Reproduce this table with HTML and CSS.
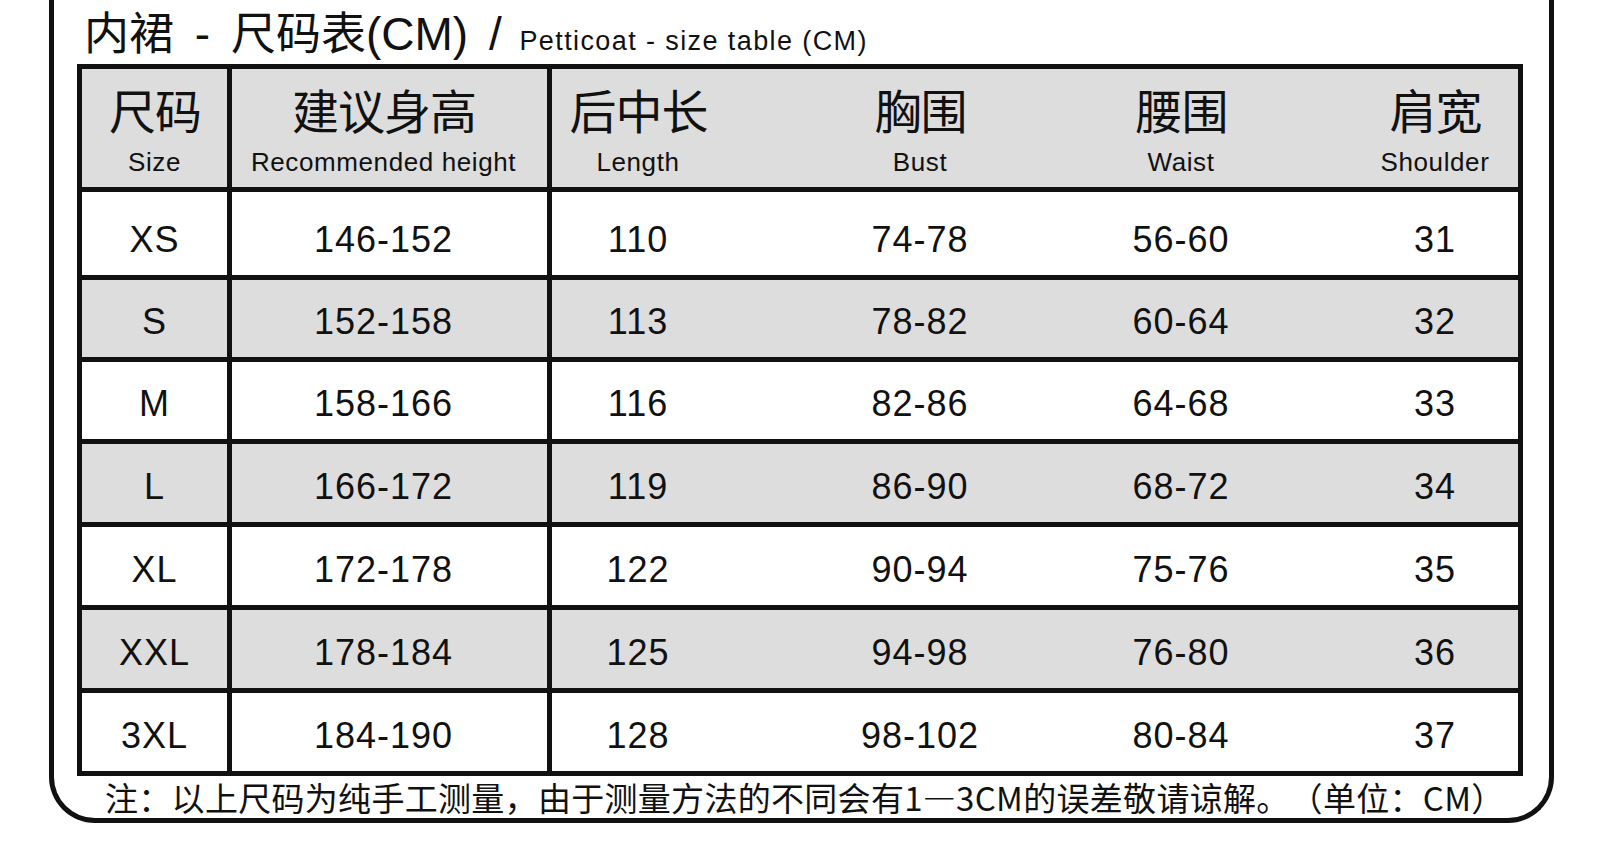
FILE: index.html
```html
<!DOCTYPE html>
<html lang="zh-CN">
<head>
<meta charset="utf-8">
<title>内裙 - 尺码表</title>
<link rel="stylesheet" href="styles.css">
</head>
<body>
<div class="frame">
  <h1 class="title"><span class="t-cjk">内裙</span> - <span class="t-cjk">尺码表</span>(CM) / <span class="t-en">Petticoat - size table (CM)</span></h1>

  <div class="size-table">
    <div class="cell c-size gray head">
      <div class="h-cn">尺码</div>
      <div class="h-en">Size</div>
    </div>
    <div class="cell c-height gray head">
      <div class="h-cn">建议身高</div>
      <div class="h-en">Recommended height</div>
    </div>
    <div class="cell c-rest gray head">
      <div class="sub s1"><div class="h-cn">后中长</div><div class="h-en">Length</div></div>
      <div class="sub s2"><div class="h-cn">胸围</div><div class="h-en">Bust</div></div>
      <div class="sub s3"><div class="h-cn">腰围</div><div class="h-en">Waist</div></div>
      <div class="sub s4"><div class="h-cn">肩宽</div><div class="h-en">Shoulder</div></div>
    </div>

    <div class="cell c-size data first">XS</div>
    <div class="cell c-height data first">146-152</div>
    <div class="cell c-rest data first">
      <div class="sub s1">110</div><div class="sub s2">74-78</div><div class="sub s3">56-60</div><div class="sub s4">31</div>
    </div>

    <div class="cell c-size data gray">S</div>
    <div class="cell c-height data gray">152-158</div>
    <div class="cell c-rest data gray">
      <div class="sub s1">113</div><div class="sub s2">78-82</div><div class="sub s3">60-64</div><div class="sub s4">32</div>
    </div>

    <div class="cell c-size data">M</div>
    <div class="cell c-height data">158-166</div>
    <div class="cell c-rest data">
      <div class="sub s1">116</div><div class="sub s2">82-86</div><div class="sub s3">64-68</div><div class="sub s4">33</div>
    </div>

    <div class="cell c-size data gray">L</div>
    <div class="cell c-height data gray">166-172</div>
    <div class="cell c-rest data gray">
      <div class="sub s1">119</div><div class="sub s2">86-90</div><div class="sub s3">68-72</div><div class="sub s4">34</div>
    </div>

    <div class="cell c-size data">XL</div>
    <div class="cell c-height data">172-178</div>
    <div class="cell c-rest data">
      <div class="sub s1">122</div><div class="sub s2">90-94</div><div class="sub s3">75-76</div><div class="sub s4">35</div>
    </div>

    <div class="cell c-size data gray">XXL</div>
    <div class="cell c-height data gray">178-184</div>
    <div class="cell c-rest data gray">
      <div class="sub s1">125</div><div class="sub s2">94-98</div><div class="sub s3">76-80</div><div class="sub s4">36</div>
    </div>

    <div class="cell c-size data">3XL</div>
    <div class="cell c-height data">184-190</div>
    <div class="cell c-rest data">
      <div class="sub s1">128</div><div class="sub s2">98-102</div><div class="sub s3">80-84</div><div class="sub s4">37</div>
    </div>
  </div>

  <p class="note">注：以上尺码为纯手工测量，由于测量方法的不同会有1—3CM的误差敬请谅解。（单位：CM）</p>
</div>
</body>
</html>
```

FILE: styles.css
```css
html, body {
  margin: 0;
  padding: 0;
  background: #ffffff;
}

body {
  color: #111111;
  font-family: "Liberation Sans", "Noto Sans CJK SC", sans-serif;
}

.frame {
  margin-left: 49px;
  width: 1495px;
  height: 818px;
  border: 5px solid #111111;
  border-top: 0;
  border-radius: 0 0 46px 46px;
  background: #ffffff;
}

/* ---------- title ---------- */
.title {
  margin: 0;
  box-sizing: border-box;
  height: 64px;
  padding: 5px 0 0 30px;
  font-family: "Liberation Sans", "Noto Sans CJK SC", sans-serif;
  font-weight: normal;
  font-size: 46px;
  line-height: 59px;
  letter-spacing: 0;
  word-spacing: 8px;
  white-space: nowrap;
  color: #111111;
}

.t-cjk {
  display: inline-block;
  font-family: "Noto Sans CJK SC", sans-serif;
  font-size: 45px;
  line-height: 50px;
  letter-spacing: 0;
  word-spacing: 0;
}

.t-en {
  display: inline-block;
  margin-left: -3px;
  font-family: "Liberation Sans", sans-serif;
  font-size: 27px;
  line-height: 30px;
  letter-spacing: 1.4px;
  word-spacing: 0;
}

/* ---------- table ---------- */
.size-table {
  margin-left: 23px;
  width: 1436px;
  display: grid;
  grid-template-columns: 145px 315px 966px;
  grid-template-rows: 118px 83px 77px 77px 78px 78px 78px 78px;
  gap: 5px;
  padding: 5px;
  background: #111111;
}

.cell {
  background: #ffffff;
  box-sizing: border-box;
}

.cell.gray {
  background: #dddddd;
}

.c-size,
.c-height {
  display: flex;
  flex-direction: column;
  align-items: center;
}

.c-height {
  padding-right: 12px;
}

.c-rest {
  display: grid;
  grid-template-columns: 21px 130px 152px 130px 131px 130px 124px 130px 1fr;
}

.c-rest .sub {
  display: flex;
  flex-direction: column;
  align-items: center;
  white-space: nowrap;
}

.s1 { grid-column: 2; }
.s2 { grid-column: 4; }
.s3 { grid-column: 6; }
.s4 { grid-column: 8; }

/* header */
.head {
  padding-top: 12px;
}

.h-cn {
  font-family: "Noto Sans CJK SC", sans-serif;
  font-size: 47px;
  line-height: 56px;
  letter-spacing: -1px;
  padding-left: 1px;
  white-space: nowrap;
}

.h-en {
  margin-top: 10px;
  font-family: "Liberation Sans", sans-serif;
  font-size: 26px;
  line-height: 30px;
  letter-spacing: 0.6px;
  white-space: nowrap;
}

/* data */
.data {
  font-family: "Liberation Sans", sans-serif;
  font-size: 36px;
  letter-spacing: 1px;
  padding-top: 7px;
  justify-content: center;
  align-items: center;
}

.c-rest.data .sub {
  justify-content: center;
}

.data.first {
  padding-top: 13px;
}

/* ---------- note ---------- */
.note {
  margin: 0;
  height: 42px;
  padding-left: 51px;
  font-family: "Noto Sans CJK SC", sans-serif;
  font-size: 33px;
  line-height: 42px;
  letter-spacing: 0.3px;
  text-spacing-trim: space-all;
  white-space: nowrap;
  color: #111111;
}
```
